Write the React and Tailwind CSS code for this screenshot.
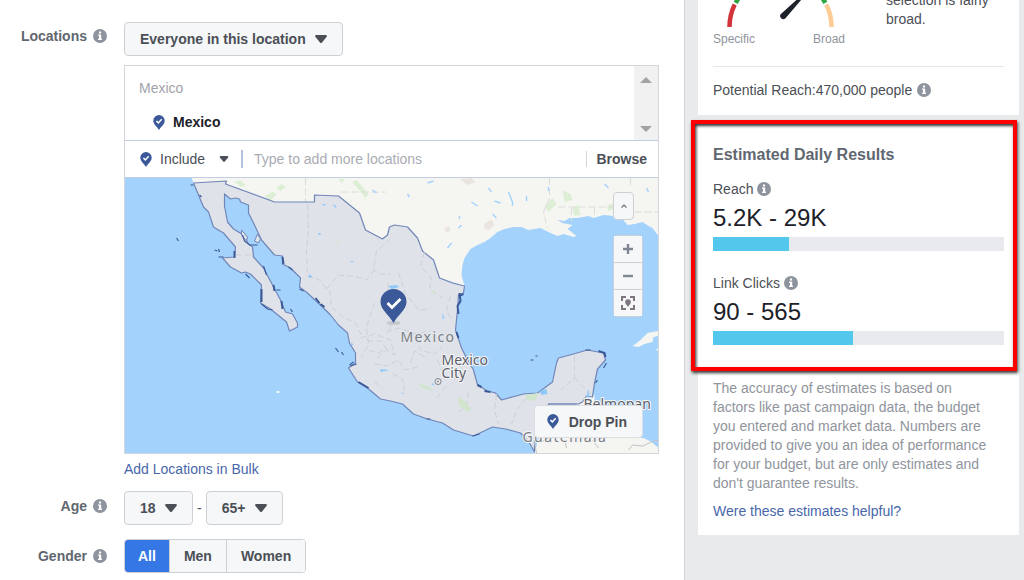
import { useState } from "react";

const GENDERS = ["All", "Men", "Women"];

const RESULTS = [
  { label: "Reach", range: "5.2K - 29K", percent: 26 },
  { label: "Link Clicks", range: "90 - 565", percent: 48 },
];

export default function App() {
  const [gender, setGender] = useState("All");
  const [query, setQuery] = useState("");

  return (
    <div className="flex min-h-screen bg-white font-['Liberation_Sans',Arial,sans-serif] text-sm leading-5 text-[#4b4f56]">
      <main className="min-w-0 flex-1 pt-[22px] pr-[25px]">
        <Row label="Locations" htmlFor="location-type" labelCls="pt-1">
          <Dropdown id="location-type" options={["Everyone in this location"]} />

          <div className="mt-[9px] border border-[#d3d6db]">
            <div className="flex h-[74px]">
              <div className="flex-1 pt-3 pl-[14px]">
                <p className="text-[#a0a3a9]">Mexico</p>
                <p className="mt-[14px] flex items-center gap-2 pl-[14px] font-bold text-[#1d2129]">
                  <PinIcon className="h-[15px] w-3" />
                  Mexico
                </p>
              </div>
              <div className="flex w-6 flex-col items-center justify-between bg-[#f1f1f1] pt-[11px] pb-2">
                <svg viewBox="0 0 12 6" className="h-[6px] w-3" fill="#a3a3a3">
                  <path d="M0 6 6 0l6 6z" />
                </svg>
                <svg viewBox="0 0 12 6" className="h-[6px] w-3" fill="#a3a3a3">
                  <path d="M0 0h12L6 6z" />
                </svg>
              </div>
            </div>

            <div className="flex h-[38px] items-center border-y border-[#c4cde0] pr-[11px] pl-[15px]">
              <PinIcon className="h-[15px] w-3" />
              <div className="relative ml-2 flex items-center">
                <select aria-label="Include or exclude" className="appearance-none bg-transparent pr-[31px] outline-none">
                  <option>Include</option>
                  <option>Exclude</option>
                </select>
                <Caret className="pointer-events-none absolute right-3 h-[6px] w-[10px]" />
              </div>
              <span className="h-[18px] w-[2px] bg-[#b4c2e0]" />
              <input
                type="text"
                aria-label="Add locations"
                value={query}
                onChange={(event) => setQuery(event.target.value)}
                placeholder="Type to add more locations"
                className="ml-[11px] min-w-0 flex-1 outline-none placeholder:text-[#a9acb3]"
              />
              <button type="button" className="border-l border-[#d3d6db] pl-[9px] leading-4 font-bold">
                Browse
              </button>
            </div>

            <div className="relative h-[275px] overflow-hidden">
              <CountryMap />
              <div className="absolute top-[14px] right-[15px] flex flex-col items-start gap-[15px]">
                <button type="button" aria-label="Collapse map" className={`${mapButtonCls} h-7 w-[21px] rounded-sm border`}>
                  <svg viewBox="0 0 8 8" className="h-2 w-2" fill="none" stroke="#6b7078" strokeWidth="1.2">
                    <path d="M1.5 5.5 4 3l2.5 2.5" />
                  </svg>
                </button>
                <div className="flex w-[30px] flex-col rounded-sm border border-[#ced0d4]">
                  <button type="button" aria-label="Zoom in" className={`${mapButtonCls} h-[26px]`}>
                    <svg viewBox="0 0 10 10" className="h-[10px] w-[10px]" fill="none" stroke="#7f8691" strokeWidth="2.4">
                      <path d="M5 0v10M0 5h10" />
                    </svg>
                  </button>
                  <button type="button" aria-label="Zoom out" className={`${mapButtonCls} h-7 border-y`}>
                    <svg viewBox="0 0 10 10" className="h-[10px] w-[10px]" fill="none" stroke="#7f8691" strokeWidth="2.4">
                      <path d="M0 5h10" />
                    </svg>
                  </button>
                  <button type="button" aria-label="Fit to pins" className={`${mapButtonCls} h-[26px]`}>
                    <svg viewBox="0 0 14 14" className="h-[14px] w-[14px]" fill="none" stroke="#7e7680" strokeWidth="2">
                      <path d="M1 5V1h4M9 1h4v4M13 9v4H9M5 13H1V9" />
                      <path
                        d="M7 3.2a2.900 2.900 0 0 1 2.900 2.900C9.900 8 8.100 9 7 11 5.900 9 4.100 8 4.100 6.100A2.900 2.900 0 0 1 7 3.200z"
                        fill="#7e7680"
                        stroke="none"
                      />
                    </svg>
                  </button>
                </div>
              </div>
              <button
                type="button"
                className="absolute right-[15px] bottom-[15px] flex h-[33px] items-center gap-[10px] rounded-sm border border-[#dcdee3] bg-[#f6f7f9] pr-[15px] pl-3 font-bold"
              >
                <PinIcon className="h-[15px] w-3" />
                Drop Pin
              </button>
            </div>
          </div>

          <a href="#bulk" className="mt-[5px] block w-fit text-[#4867aa]">
            Add Locations in Bulk
          </a>
        </Row>

        <Row label="Age" htmlFor="age-min" className="mt-3" labelCls="pt-[5px]">
          <div className="flex items-center gap-1">
            <Dropdown id="age-min" options={["18"]} />
            <span>-</span>
            <Dropdown id="age-max" aria-label="Maximum age" options={["65+"]} />
          </div>
        </Row>

        <Row label="Gender" className="mt-[14px]" labelCls="pt-[7px]">
          <div role="radiogroup" aria-label="Gender" className="flex w-fit overflow-hidden rounded-sm border border-[#ced0d4]">
            {GENDERS.map((item) => (
              <label
                key={item}
                className={`flex h-8 cursor-pointer items-center border-l border-[#ced0d4] px-[14px] font-bold first:border-l-0 first:px-[13px] ${
                  gender === item ? "bg-[#3578e5] text-white" : "bg-[#f6f7f9]"
                }`}
              >
                <input
                  type="radio"
                  name="gender"
                  value={item}
                  checked={gender === item}
                  onChange={() => setGender(item)}
                  className="sr-only"
                />
                {item}
              </label>
            ))}
          </div>
        </Row>
      </main>

      <aside className="w-[340px] shrink-0 border-l border-[#d0d2d5] bg-[#e9eaeb] pr-[5px] pl-[13px]">
        <section className="bg-white px-[15px] pb-[15px]">
          <div className="flex h-[49px] items-end gap-[41px] overflow-hidden">
            <div className="w-[132px] shrink-0">
              <Gauge />
              <div className="flex justify-between text-xs leading-5 text-[#90949c]">
                <span>Specific</span>
                <span>Broad</span>
              </div>
            </div>
            <p className="pb-5 leading-[19px]">
              Your audience selection is fairly broad.
            </p>
          </div>
          <hr className="mt-[17px] border-[#e5e6e9]" />
          <p className="mt-[13px] flex items-center gap-[5px]">
            Potential Reach:470,000 people
            <InfoIcon />
          </p>
        </section>

        <section className="relative mt-[10px] bg-white px-[15px] pt-5 pb-[14px]">
          {/* highlight frame around the estimates */}
          <div className="pointer-events-none absolute -top-[5px] right-[2px] -left-[7px] h-[251px] border-4 border-[#fe0000] shadow-[1px_2px_3px_#333,inset_1px_2px_3px_#333]" />
          <h2 className="text-base leading-5 font-bold text-[#616770]">Estimated Daily Results</h2>
          {RESULTS.map((result) => (
            <Result key={result.label} {...result} />
          ))}
          <p className="mt-[34px] pr-3 leading-[19px] text-[#90949c]">
            The accuracy of estimates is based on factors like past campaign data, the budget you entered and market
            data. Numbers are provided to give you an idea of performance for your budget, but are only estimates and
            don't guarantee results.
          </p>
          <a href="#feedback" className="mt-2 block text-[#4867aa]">
            Were these estimates helpful?
          </a>
        </section>
      </aside>
    </div>
  );
}

function Row({ label, htmlFor, className = "", labelCls = "", children }) {
  return (
    <div className={`flex gap-[17px] ${className}`}>
      <div className={`flex h-fit w-[107px] shrink-0 items-center justify-end gap-[6px] font-bold text-[#616770] ${labelCls}`}>
        <label htmlFor={htmlFor}>{label}</label>
        <InfoIcon />
      </div>
      <div className="min-w-0 flex-1">{children}</div>
    </div>
  );
}

function Dropdown({ options, ...props }) {
  return (
    <div className="relative flex w-fit items-center">
      <select
        {...props}
        className="h-[34px] appearance-none rounded-sm border border-[#ced0d4] bg-[#f6f7f9] pr-[36px] pl-[15px] font-bold outline-none"
      >
        {options.map((option) => (
          <option key={option}>{option}</option>
        ))}
      </select>
      <Caret className="pointer-events-none absolute right-4 h-2 w-3" />
    </div>
  );
}

function Result({ label, range, percent }) {
  return (
    <div className="mt-[14px] mb-[22px] last-of-type:mb-0">
      <p className="flex items-center gap-1">
        {label}
        <InfoIcon />
      </p>
      <p className="mt-1 text-2xl leading-[30px] text-[#1d2129]">{range}</p>
      <div className="mt-1 h-[14px] bg-[#e9eaee]">
        <div className="h-full bg-[#54c7ec]" style={{ width: `${percent}%` }} />
      </div>
    </div>
  );
}

function Caret({ className }) {
  return (
    <svg viewBox="0 0 12 8" className={className} fill="#4b4f56">
      <path d="M1.500 0h9C11.800 0 12.300 1.200 11.500 2.100L7 7.400c-.6.700-1.400.7-2 0L.5 2.100C-.3 1.200.2 0 1.500 0z" />
    </svg>
  );
}

function InfoIcon() {
  return (
    <svg viewBox="0 0 14 14" className="h-[14px] w-[14px] shrink-0">
      <circle cx="7" cy="7" r="7" fill="#8d949e" />
      <path d="M5.900 2.500h2.200v2H5.900zM5 5.500h3.200v4.300H9V11H5V9.800h1V6.700H5z" fill="#fff" />
    </svg>
  );
}

function PinIcon({ className }) {
  return (
    <svg viewBox="0 0 12 15" className={`shrink-0 ${className}`}>
      <path d="M6 0a5.700 5.700 0 0 1 5.700 5.700C11.700 9.200 8 11.500 6 15 4 11.500.3 9.200.3 5.700A5.700 5.700 0 0 1 6 0z" fill="#3b5998" />
      <path d="m3.400 6 1.900 1.900 3.400-3.700" fill="none" stroke="#fff" strokeWidth="1.500" />
    </svg>
  );
}

function Gauge() {
  return (
    <svg viewBox="0 0 132 60" className="block h-[60px] w-[132px]" fill="none" strokeWidth="4.500">
      <path d="M16.500 58a51 51 0 0 1 5.200-22.500" stroke="#d2343a" />
      <path d="M22.700 33.800a51 51 0 0 1 89.600 0" stroke="#2fa63f" />
      <path d="M113.300 35.500A51 51 0 0 1 118.500 58" stroke="#ffcb94" />
      <path d="M68.200 44.800 96 19.500l1 1L72.500 49.300a3 3 0 0 1-4.300-4.500z" fill="#1d2129" />
    </svg>
  );
}

function CountryMap() {
  return (
    <svg viewBox="0 0 534 275" preserveAspectRatio="xMidYMid slice" className="block h-full w-full">
      <rect width="534" height="275" fill="#a3d2fd" />

      {/* United States, Central America, Cuba */}
      <g fill="#f5f5f1">
        <path d="M67 0H534V58L528 50 524 48 518 44 510 46 503 47 498 41 489 38 479 37 469 40 464 38 453 40 445 40 440 43 433 42 438 45 448 47 443 51 452 58 449 59 439 56 433 58 426 55 416 50 404 52 397 49 389 49 380 51 373 54 366 60 360 64 353 67 346 71 344 74 340 80 338 87 337 97 340 108 300 95 250 80 150 35 118 18 90 8 69 5z" />
        <path d="M410 275 424 226 470 217 470 228 462 244 460 260 519 260 527 264 534 270V275z" />
        <path d="M534 153 523 155 516 162 508 168 514 169 520 166 528 164 529 159 534 158zM531 172l3 1v-3z" />
      </g>
      <g fill="#dcefd5">
        <path d="M140 18l8-4 4 2-6 7zM110 4l6-2 5 5-4 2zM152 10l5-4 4 3-5 4zM228 4l4-2 12 14-3 4zM420 28l8-8 4 6-8 8zM438 12l8 4 2 6-8 2zM448 30l6-3 2 10-6 1zM482 28l8-3 3 4-9 4zM214 1l6 0-3 4z" />
      </g>
      <g fill="#e9e4de">
        <path d="M335 1l12-1 4 4-8 3zM320 50l4-2 2 5-5 1zM360 45l7-3 3 5-6 5-4-2z" />
      </g>
      <g fill="none" stroke="#dcdcda" strokeDasharray="7 3">
        <path d="M181 0v24M217 14h44M425 0v20l-6 14 4 16M434 29h62M470 30v10M447 30v14M510 34h24M506 0v10" />
      </g>
      <g fill="none" stroke="#a3d2fd" strokeWidth="1.400">
        <path d="M364 10l3 4M384 14l4 10v4M347 24l6 4M370 23l6 2M372 40l-4-4M323 70l4-5M334 50l3-3M402 18v5M424 13v-4M480 6l4 4M522 10l2 4M283 16l2 3M303 5l6-2M335 38v3M248 12l4 3" />
      </g>

      {/* Mexico */}
      <path
        d="M69 5 102 3 101 6 150 24H190V17L214 18 235 35 241 52 258 61 263 57 265 49 270 47 283 49 293 60 298 73 309 82 315 100 328 105 340 108 339 115 334 117 333 132 331 152 337 170 343 182 349 192 353 207 363 213 371 215 377 222 399 216 413 215 428 204 432 185 434 180 449 176 463 172 479 175 481 182 473 191 470 205 468 219 462 218 458 224 454 226H424V237H430L418 252 410 263V274L405 265 396 255 381 251 368 249 349 258 329 252 318 245 303 241 289 236 278 226 266 223 256 221 243 210 233 204 224 190 231 185 231 175 225 165 223 155 214 147 206 137 198 129 183 115 175 109 176 100 166 90 158 86 158 78 150 77 137 62 130 47 124 35V27L116 24 115 21 111 20 106 21 100 16V28L103 44 109 51 119 57 124 66 128 69 129 79 139 90 148 107 156 122 161 134 168 136 173 145V149L165 153 162 144 146 131 136 125 137 107 126 96 121 94 117 95 106 89 98 80 110 79 111 69 99 55 89 49 84 34 79 29 74 17z"
        fill="#dfe3e9"
        stroke="#7186b8"
        strokeWidth="1.200"
        strokeLinejoin="round"
      />
      <path d="M117 52l6 7-1 4-5-6zM133 56l3 5-2 4-4-2z" fill="#dfe3e9" stroke="#7186b8" />
      <g fill="none" stroke="#cdd0d5" strokeDasharray="6 3">
        <path d="M183 26l1 26-2 20 1 26 12 4 7 9M202 111l12-14 18 2 10 3 8-10M266 61l-14 12-3 19 7 4 10 0M205 112l2 17 10 9 14 7 6 12M264 105l-2 26 8 8-6 14M111 77h17M250 125l-8 24 2 18-7 12M274 95l7 20 14 18 10-3M262 154l12-4 18 6 14-4M300 74l-4 14 11 12-2 12 13 8M236 160l14-4 16 6 4 15M250 186l12 2 12-6 6 10 13-3M290 160l6 12 14 4 8-8M313 182l6 14 10 5 12-2M344 214l-2 14-10 8M322 208l-10 12M372 216l-2 16 4 14M402 220l-10 12-5 14M450 178v22l-14 12M450 200l16 16M268 196l10 5 2 12M250 204l8 6M326 118l-4 14 6 12M243 163h14l5 8-8 4-11-3M253 180l9-8 9 5M286 185l4-12 10 6" />
      </g>
      <g fill="#d0e5cc">
        <path d="M333 218l8 6 6 8-4 2-8-6zM401 217l13-2-3 7-8 1zM293 205l12 4 5 4-12-3zM213 62l2 3-2 2zM306 117l2-5 3 1z" />
      </g>
      <g fill="#8fc8fb">
        <path d="M264 108l8-1 3 2-8 2zM256 191l9 1-9 2zM208 26l4 2-1 2zM198 26l4 0-3 2zM185 96l3 3-4 1zM318 135l2 5-2 1zM308 205l2 2-3 0zM276 214l4 2-2 0zM227 164l2 3-2 0zM415 213l7-2 1 5-6 1zM194 55h2v2h-2zM226 83h3v1h-3zM462 219l2-8 1 9z" />
      </g>

      {/* islands and lagoons along the coasts */}
      <g fill="none" stroke="#3b5998" strokeWidth="2">
        <path d="M335 115l1 8-3 5 1 8M334 118l5-2M332 154l2 6M353 207l4 2M360 213l6 1M474 173l6 2 1 4M158 79l1 7M196 126l4 3M234 204l10 6M191 120l4 5M110 73v7M137 111v13M149 107l1 6M157 123l1 8" />
      </g>
      <g fill="none" stroke="#3b5998" strokeWidth="1.200">
        <path d="M66 7h3M75 17l2 2M52 60l2 3M90 72l3 1M95 74l-1-3M94 79h5M164 89l4 3M175 111l4 2M137 126l6 5 5 1M166 131l2 3M152 112l4 0M118 57l2 6 5 4h8M139 88l3 9M121 96l4 4M211 170l3 4M217 174l2 3M225 187l4-3M302 241h4M348 258l7-2M461 172h5M406 182h3M411 178h2M479 190l3-5M471 205l2-3M226 188l6-2" />
      </g>
      <path d="M152 213h3v2h-3z" fill="#f5f5f1" />
      <g fill="none" stroke="#c3c3c4">
        <path d="M504 272l4-5 10 1 9-4 7-2M426 262l-16 2 2 11M440 262l2 8M468 262l6 8" />
      </g>
      <path d="M424 226h28" stroke="#7186b8" />

      <circle cx="313.500" cy="203.500" r="3" fill="#eceef2" stroke="#7d8087" />
      <circle cx="313.500" cy="203.500" r="1" fill="#7d8087" />

      <g
        className="font-['Noto_Sans',sans-serif] text-sm"
        fill="#5c6068"
        stroke="#f5f6f8"
        strokeWidth="2"
        strokeLinejoin="round"
        paintOrder="stroke"
      >
        <text x="276" y="164" className="tracking-widest" fill="#7b7e84" stroke="#e4e7ec">
          Mexico
        </text>
        <text x="317" y="187">
          Mexico
        </text>
        <text x="317" y="200">
          City
        </text>
        <text x="459" y="231">
          Belmopan
        </text>
        <text x="398" y="264" className="tracking-widest" fill="#7b7e84">
          Guatemala
        </text>
      </g>

      <ellipse cx="269" cy="145" rx="7" ry="2" fill="#c5c8cd" />
      <path d="M269 111a13 13 0 0 1 13 13c0 8-9 13-13 21-4-8-13-13-13-21a13 13 0 0 1 13-13z" fill="#3b5998" />
      <path d="m263 125 4.500 4.500 8.500-8.500" fill="none" stroke="#fff" strokeWidth="2.800" />
    </svg>
  );
}

const mapButtonCls = "flex items-center justify-center border-[#ced0d4] bg-[#f6f7f9]";
